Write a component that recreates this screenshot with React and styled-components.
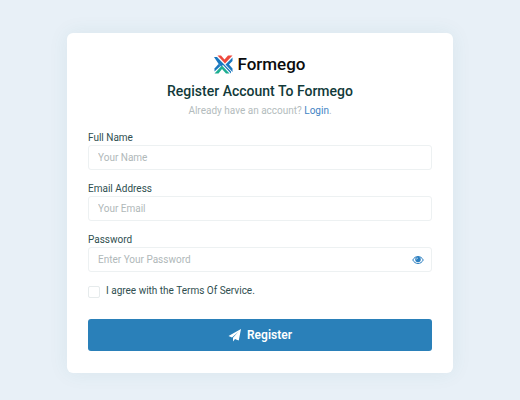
import React, { useState } from "react";
import styled, { createGlobalStyle } from "styled-components";

const GlobalStyle = createGlobalStyle`
  * { box-sizing: border-box; }
  body {
    margin: 0;
    background: #e8f0f7;
    color: #2f4f50;
    font-family: Roboto, sans-serif;
    font-size: 10px;
    line-height: 16px;
  }
`;

const Page = styled.main`
  min-height: 100vh;
  padding: 33px 67px 27px;
`;

const Card = styled.section`
  max-width: 480px;
  margin: 0 auto;
  padding: 20px 21px 22px;
  background: #fff;
  border-radius: 6px;
  box-shadow: 0 0 20px rgba(40, 120, 110, 0.08);
`;

const Brand = styled.div`
  display: flex;
  align-items: center;
  justify-content: center;
  gap: 4px;
  height: 22px;
  color: #0b0c0e;
  font-size: 17px;
  font-weight: 500;
`;

const Title = styled.h1`
  margin: 6px 0 0;
  color: #123a3a;
  font-size: 14px;
  font-weight: 500;
  line-height: 20px;
  text-align: center;
`;

const Hint = styled.p`
  margin: 2px 0 0;
  color: #b3bcbd;
  text-align: center;
`;

const Link = styled.a`
  color: #3f84c4;
  text-decoration: none;
`;

const Form = styled.form`
  margin-top: 12px;
`;

const Field = styled.div`
  margin-bottom: 12px;
`;

const Label = styled.label`
  display: block;
  line-height: 14px;
`;

const InputBox = styled.div`
  display: flex;
  align-items: center;
  height: 25px;
  padding-right: 7px;
  border: 1px solid #edf1f2;
  border-radius: 3px;
`;

const Input = styled.input`
  flex: 1;
  min-width: 0;
  height: 100%;
  padding: 0 9px;
  border: 0;
  outline: 0;
  background: transparent;
  color: inherit;
  font: inherit;
  &::placeholder { color: #b0b8b9; opacity: 1; }
`;

const IconButton = styled.button`
  display: flex;
  padding: 0;
  border: 0;
  background: none;
  color: #2a7ec0;
  cursor: pointer;
`;

const Terms = styled.div`
  display: flex;
  align-items: center;
  gap: 6px;
`;

const Checkbox = styled.input`
  appearance: none;
  width: 12px;
  height: 12px;
  margin: 1px 0 0;
  border: 1px solid #e6ebec;
  border-radius: 2px;
  &:checked { background: #2980b9; }
`;

const Submit = styled.button`
  display: flex;
  align-items: center;
  justify-content: center;
  gap: 6px;
  width: 100%;
  height: 32px;
  margin-top: 21px;
  border: 0;
  border-radius: 3px;
  background: #2a80b9;
  color: #fff;
  font: 600 12px Roboto, sans-serif;
  cursor: pointer;
`;

function Logo() {
  return (
    <svg width="19" height="19" viewBox="0 0 38 38" aria-hidden="true">
      <path d="M7 1h7l7 8 7-8h9L22 17z" fill="#ed493d" />
      <path d="M1 37l15-16 15 16h-7l-8-9-7 9z" fill="#1dae91" />
      <path d="M0 4h6l28 29v4L18 20l-4 3-4-4z" fill="#1977bf" />
      <path d="M1 33V27l8-9 4 4z" fill="#1977bf" />
      <path d="M37 5v7l-7 7 7 8v7L23 19z" fill="#1977bf" />
    </svg>
  );
}

function EyeIcon() {
  return (
    <svg width="12" height="10" viewBox="0 0 24 20" fill="none" aria-hidden="true">
      <path d="M1.500 10C4 5.500 7.500 3 12 3s8 2.500 10.500 7C20 14.500 16.500 17 12 17s-8-2.500-10.500-7z" stroke="currentColor" strokeWidth="2" />
      <circle cx="12" cy="9" r="5.500" fill="currentColor" />
      <path d="M9 9a3 3 0 0 1 3-3" stroke="#fff" strokeWidth="1.200" />
    </svg>
  );
}

function PlaneIcon() {
  return (
    <svg width="13" height="13" viewBox="0 0 26 26" fill="currentColor" aria-hidden="true">
      <path d="M26 0L21.500 23l-7.500-3-4 5v-7L22 5 8 17l-7-3z" />
      <path d="M10 18L23 4l-2 18-7-3z" />
    </svg>
  );
}

function TextField({ id, label, children, ...rest }) {
  return (
    <Field>
      <Label htmlFor={id}>{label}</Label>
      <InputBox>
        <Input id={id} {...rest} />
        {children}
      </InputBox>
    </Field>
  );
}

export default function App() {
  const [visible, setVisible] = useState(false);
  return (
    <Page>
      <GlobalStyle />
      <Card>
        <Brand><Logo />Formego</Brand>
        <Title>Register Account To Formego</Title>
        <Hint>Already have an account? <Link href="#login">Login</Link>.</Hint>
        <Form onSubmit={(e) => e.preventDefault()}>
          <TextField id="name" label="Full Name" type="text" placeholder="Your Name" />
          <TextField id="email" label="Email Address" type="email" placeholder="Your Email" />
          <TextField
            id="password"
            label="Password"
            type={visible ? "text" : "password"}
            placeholder="Enter Your Password"
          >
            <IconButton type="button" aria-label="Show password" onClick={() => setVisible(!visible)}>
              <EyeIcon />
            </IconButton>
          </TextField>
          <Terms>
            <Checkbox id="terms" type="checkbox" />
            <Label htmlFor="terms">I agree with the Terms Of Service.</Label>
          </Terms>
          <Submit type="submit"><PlaneIcon />Register</Submit>
        </Form>
      </Card>
    </Page>
  );
}
